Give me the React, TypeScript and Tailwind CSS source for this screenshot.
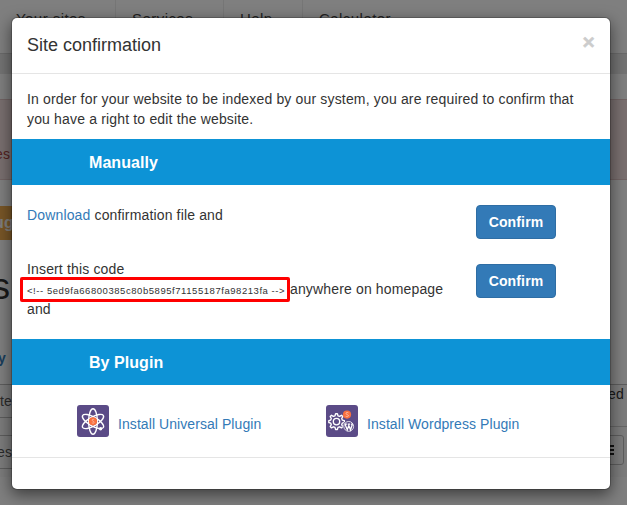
import React from "react";

function AtomIcon() {
  return (
    <svg width="32" height="32" viewBox="0 0 32 32" className="block shrink-0">
      <rect width="32" height="32" rx="3" fill="#5b4b87" />
      <g fill="none" stroke="#fff" strokeWidth="1.4">
        <ellipse cx="16" cy="16.5" rx="4.4" ry="12.7" />
        <ellipse cx="16" cy="16.5" rx="4.4" ry="12" transform="rotate(60 16 16.5)" />
        <ellipse cx="16" cy="16.5" rx="4.4" ry="12" transform="rotate(-60 16 16.5)" />
      </g>
      <circle cx="16" cy="16.3" r="4.1" fill="#f9703e" />
      <path d="M17.2 14.6c-1.4-.8-2.6.2-2 1 .5.7 1.9.6 2 1.6.1.9-1.2 1.3-2.4.6" fill="none" stroke="#fff" strokeOpacity=".6" strokeWidth=".7" />
      <circle cx="23.6" cy="23.8" r="1.7" fill="#fff" />
    </svg>
  );
}

function GearIcon() {
  return (
    <svg width="32" height="32" viewBox="0 0 32 32" className="block shrink-0">
      <rect width="32" height="32" rx="3" fill="#5b4b87" />
      <g fill="none" stroke="#fff" strokeWidth="1.35" strokeLinejoin="round">
        <path d="M9.6 8.7h1.8l.6 2.1 1.6.6 1.9-1.1 1.3 1.3-1.1 1.9.6 1.6 2.1.6v1.8l-2.1.6-.6 1.6 1.1 1.9-1.3 1.3-1.9-1.1-1.6.6-.6 2.1H9.6L9 22.4l-1.6-.6-1.9 1.1-1.3-1.3 1.1-1.9-.6-1.6-1.9-.6v-1.8l1.9-.6.6-1.6-1.1-1.9 1.3-1.3 1.9 1.1 1.6-.6z" />
        <circle cx="10.5" cy="16.6" r="3.2" />
      </g>
      <circle cx="21" cy="9.6" r="4.1" fill="#f9703e" />
      <path d="M22.4 7.8c-1.6-.9-2.9.2-2.3 1.1.5.8 2.2.7 2.3 1.7.1 1-1.4 1.5-2.7.7" fill="none" stroke="#fff" strokeOpacity=".6" strokeWidth=".8" />
      <circle cx="22.7" cy="21.4" r="6" fill="#5b4b87" />
      <circle cx="22.7" cy="21.4" r="4.9" fill="#5b4b87" stroke="#fff" strokeWidth=".8" />
      <path d="M19.1 19.5l2.2 5.3 1.5-4.3 1.7 4.3 1.8-5.3M18.7 19.1h2.2m.8 0h2.4m.8 0h1.9" fill="none" stroke="#fff" strokeWidth="1.3" />
    </svg>
  );
}

function Background() {
  return (
    <div className="flex h-[505px] w-full flex-col overflow-hidden bg-white">
      <nav className="flex h-[53px] shrink-0 text-[15px] leading-[38px] tracking-[0.45px] text-[#444]">
        <div className="w-[116px] border-r border-[#ededed] pl-4">Your sites</div>
        <div className="w-[108px] border-r border-[#ededed] pl-4">Services</div>
        <div className="w-[79px] border-r border-[#ededed] pl-4">Help</div>
        <div className="pl-4">Calculator</div>
      </nav>
      <div className="h-[21px] shrink-0 border-t border-[#d5d5d5] bg-[#e6e6e6]" />
      <div className="h-[25px] shrink-0" />
      <div className="h-[81px] shrink-0 border-y border-[#e2c6c6] bg-[#f2dede] pt-[44px] leading-5 text-[#a94442]">
        <span className="-ml-[5px]">es</span>
      </div>
      <div className="mt-[26px] h-[34px] w-14 shrink-0 bg-[#f0ad4e] text-[16px] font-bold leading-[34px] text-white">
        <span className="-ml-[6px]">ug</span>
      </div>
      <div className="h-[98px] shrink-0 pt-[17px] text-[36px] leading-[60px] text-[#333]">
        <span className="-ml-[8px]">s</span>
      </div>
      <div className="h-[46px] shrink-0 pt-[10px] font-bold leading-5 text-[#337ab7]">
        <span className="-ml-[2px]">y</span>
      </div>
      <div className="flex h-[93px] shrink-0 justify-between border-t border-[#bbb] bg-[#f9f9f9]">
        <div className="w-8">
          <div className="h-8 leading-[33px] text-[#555]">te</div>
          <div className="h-[19px] border-y border-[#bbb]" />
          <div className="h-[33px] border-b border-[#bbb] leading-[32px] text-[#555]">
            <span className="-ml-[3px]">es</span>
          </div>
        </div>
        <div className="w-[24px] text-[#333]">
          <div className="h-[42px] border-b border-[#ccc] pl-[5px] leading-[18px]">ed</div>
          <div className="mt-2 flex h-[30px] w-[21px] flex-col justify-center gap-[2px] rounded-[3px] border border-[#bbb] pl-[4px]">
            <i className="h-[2px] w-[6px] bg-[#222]" />
            <i className="h-[2px] w-[6px] bg-[#222]" />
            <i className="h-[2px] w-[6px] bg-[#222]" />
          </div>
        </div>
      </div>
    </div>
  );
}

function ConfirmButton() {
  return (
    <button className="h-[34px] w-20 shrink-0 rounded-[4px] border border-[#2e6da4] bg-[#337ab7] text-center font-bold text-white">
      Confirm
    </button>
  );
}

function SectionTitle({ children }: { children: React.ReactNode }) {
  return <h2 className="h-[46px] bg-[#0d93d6] pl-[77px] text-base font-bold leading-[48px] tracking-[0.05px] text-white">{children}</h2>;
}

export default function App() {
  return (
    <div className="relative h-[505px] w-full overflow-hidden font-['Liberation_Sans',Arial,sans-serif] text-sm tracking-[0.15px]">
      <Background />
      <div className="absolute inset-0 bg-black/50" />
      <div role="dialog" className="absolute left-[11px] top-[17px] flex h-[473px] w-[600px] flex-col rounded-[6px] border border-black/20 bg-white bg-clip-padding leading-5 text-[#333] shadow-[0_5px_15px_rgba(0,0,0,0.5)]">
        <header className="flex h-14 justify-between border-b border-[#e5e5e5] px-[15px] pt-[13px]">
          <h1 className="text-lg leading-[28px] tracking-normal">Site confirmation</h1>
          <button className="h-[21px] text-[21px] font-bold leading-[21px] text-[#ccc] [-webkit-text-stroke:0.5px_#ccc]">×</button>
        </header>
        <p className="h-[65px] px-[15px] pt-[15px] tracking-[0.165px]">
          In order for your website to be indexed by our system, you are required to confirm that
          <br />
          you have a right to edit the website.
        </p>
        <SectionTitle>Manually</SectionTitle>
        <div className="flex h-[79px] justify-between pl-[15px] pr-[54px] pt-5">
          <p><a className="text-[#337ab7]">Download</a> confirmation file and</p>
          <ConfirmButton />
        </div>
        <div className="flex h-[75px] justify-between pl-[15px] pr-[54px]">
          <div className="-mt-[5px] whitespace-nowrap">
            <p>Insert this code</p>
            <div className="flex h-5 items-center">
              <code className="-ml-[7px] flex h-[25px] w-[270px] shrink-0 items-center rounded-[2px] border-[3px] border-[#f00] pl-1 pt-[3px] font-['Liberation_Sans',Arial,sans-serif] text-[9.5px] tracking-[0.55px]">
                {"<!-- 5ed9fa66800385c80b5895f71155187fa98213fa -->"}
              </code>
              <span>anywhere on homepage</span>
            </div>
            <p>and</p>
          </div>
          <ConfirmButton />
        </div>
        <SectionTitle>By Plugin</SectionTitle>
        <div className="flex h-[73px] border-b border-[#e5e5e5] pl-[65px] pt-5 tracking-[0.07px] text-[#337ab7]">
          <a className="flex h-8 w-[249px] gap-[9px]">
            <AtomIcon />
            <span className="pt-[9px]">Install Universal Plugin</span>
          </a>
          <a className="flex h-8 gap-[9px]">
            <GearIcon />
            <span className="pt-[9px]">Install Wordpress Plugin</span>
          </a>
        </div>
      </div>
    </div>
  );
}
